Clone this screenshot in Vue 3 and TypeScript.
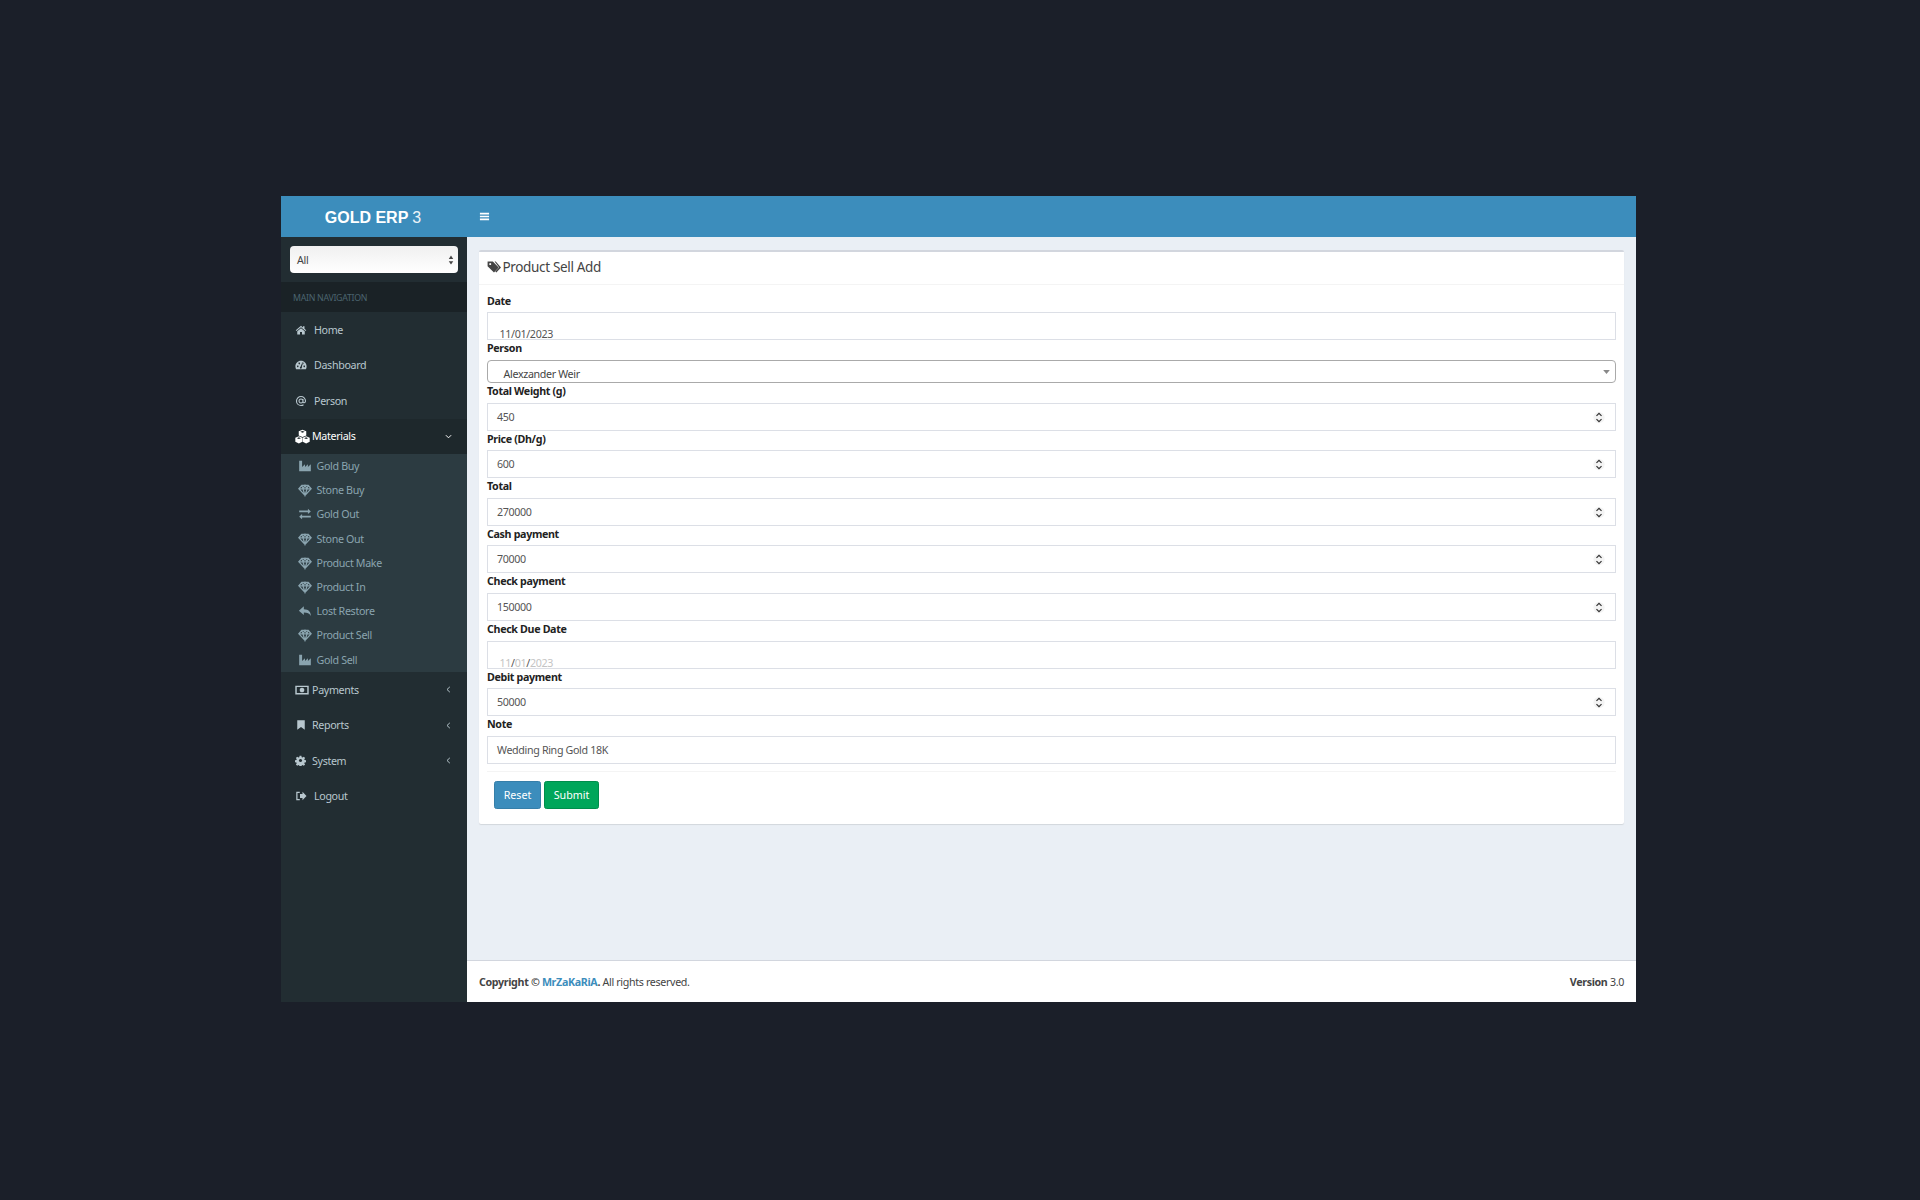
<script setup lang="ts">
const gearHole = 'M12 8.500a3.500 3.500 0 1 0 .01 0z'
const fills: Record<string, string> = {
  home: 'M12 3.500 1.500 12.500l1.300 1.500L12 6.300l9.200 7.700 1.300-1.500-3.500-3V4.500h-3v2.400zM4.500 14.700V21H10v-5h4v5h5.500v-6.300L12 8.500z',
  dashboard: 'M12 3.500C5.600 3.500.8 8.600.8 15c0 2.100.5 4 1.500 5.700h19.400c1-1.700 1.500-3.600 1.500-5.700 0-6.400-4.800-11.500-11.200-11.500zM5.500 13a1.600 1.600 0 1 0 .01 0zM8.500 7.200a1.600 1.600 0 1 0 .01 0zM18.500 13a1.600 1.600 0 1 0 .01 0zM15.500 7.200a1.600 1.600 0 1 0 .01 0zM11 15.500a2 2 0 1 0 2.600 1l1.600-7.800-1.200-.2z',
  cubes: 'M12 1l6 2.600v6.600l-6 2.600-6-2.600V3.600zM12 3 8.500 4.500 12 6l3.500-1.500zM6.200 11.500l5.500 2.400v6.400l-5.500 2.700-5.700-2.700v-6.400zM6.200 13.300 3 14.600l3.200 1.300 3.200-1.300zM17.800 11.500l5.700 2.400v6.400l-5.700 2.700-5.500-2.700v-6.400zM17.800 13.300l-3.200 1.300 3.200 1.300 3.200-1.300z',
  industry: 'M2 21V3h5v10.500L12 9v4.500L17 9v4.500L22 9v12z',
  exchange: 'M2 6h15V3l5 4.500-5 4.500V9H2zM22 15H7v-3l-5 4.500L7 21v-3h15z',
  reply: 'M10 4 1.500 11.500 10 19v-4.500c6 0 9.500 1.500 12 6 0-7-3.500-11.200-12-11.500z',
  money: 'M.5 4.500h23v15H.5zM3 7v10h18V7zM12 8a4 4 0 1 0 .01 0z',
  bookmark: 'M4.500 2.500h15v19L12 16l-7.500 5.500z',
  cog: 'M10 1.500h4l.6 3.200 1.900.8 2.700-1.800 2.800 2.800-1.800 2.700.8 1.900 3.200.6v4l-3.200.6-.8 1.900 1.800 2.700-2.800 2.800-2.700-1.800-1.900.8-.6 3.200h-4l-.6-3.200-1.900-.8-2.700 1.800-2.800-2.800 1.800-2.700-.8-1.900-3.200-.6v-4l3.200-.6.8-1.900-1.800-2.700 2.800-2.800 2.700 1.800 1.900-.8z' + gearHole,
  logout: 'M9.500 3.500H2.500v17h7V18H5V6h4.500zM10 8h5V3.500l8 8.500-8 8.500V16h-5z',
  tag: 'M1 2.500h9L20 13l-8 8.500L1 10.500zM5.500 5a1.800 1.800 0 1 0 .01 0zM13 2.500h2L24 13l-8 8.500-1.800-1.700 6.500-6.800z',
  bars: 'M2 4h20v3.600H2zM2 10.200h20v3.600H2zM2 16.400h20V20H2z'
}
const strokes: Record<string, string> = {
  at: 'M12 8a4 4 0 1 0 .01 0zM16 8v5.500c0 3 5 3 5-1.500 0-5-4-9-9-9s-9 4-9 9 4 9 9 9c2 0 3.500-.5 5-1.500',
  diamond: 'M6.500 4h11L22.500 10 12 21 1.500 10zM1.500 10h21M8.500 10 12 21l3.500-11M8.500 10 12 4l3.500 6M6.500 4l2 6M17.500 4l-2 6',
  left: 'M15.500 5 8 12l7.500 7',
  down: 'M5 8.500l7 7 7-7'
}

interface NavItem { label: string; icon: string; tight?: boolean; chevron?: 'left' | 'down'; active?: boolean }
const navTop: NavItem[] = [
  { label: 'Home', icon: 'home' },
  { label: 'Dashboard', icon: 'dashboard' },
  { label: 'Person', icon: 'at' },
  { label: 'Materials', icon: 'cubes', tight: true, chevron: 'down', active: true }
]
const subItems = [
  { label: 'Gold Buy', icon: 'industry' },
  { label: 'Stone Buy', icon: 'diamond' },
  { label: 'Gold Out', icon: 'exchange' },
  { label: 'Stone Out', icon: 'diamond' },
  { label: 'Product Make', icon: 'diamond' },
  { label: 'Product In', icon: 'diamond' },
  { label: 'Lost Restore', icon: 'reply' },
  { label: 'Product Sell', icon: 'diamond' },
  { label: 'Gold Sell', icon: 'industry' }
]
const navBottom: NavItem[] = [
  { label: 'Payments', icon: 'money', tight: true, chevron: 'left' },
  { label: 'Reports', icon: 'bookmark', tight: true, chevron: 'left' },
  { label: 'System', icon: 'cog', tight: true, chevron: 'left' },
  { label: 'Logout', icon: 'logout' }
]

interface Field { label: string; kind: 'date' | 'empty-date' | 'select' | 'number' | 'text'; value: string }
const fields: Field[] = [
  { label: 'Date', kind: 'date', value: '11/01/2023' },
  { label: 'Person', kind: 'select', value: 'Alexzander Weir' },
  { label: 'Total Weight (g)', kind: 'number', value: '450' },
  { label: 'Price (Dh/g)', kind: 'number', value: '600' },
  { label: 'Total', kind: 'number', value: '270000' },
  { label: 'Cash payment', kind: 'number', value: '70000' },
  { label: 'Check payment', kind: 'number', value: '150000' },
  { label: 'Check Due Date', kind: 'empty-date', value: '' },
  { label: 'Debit payment', kind: 'number', value: '50000' },
  { label: 'Note', kind: 'text', value: 'Wedding Ring Gold 18K' }
]
</script>

<template>
  <div class="window">
    <aside class="sidebar">
      <div class="logo"><b>GOLD ERP</b> <span>3</span></div>
      <div class="filter">
        <div class="filter-select">
          <span>All</span>
          <svg class="updown" viewBox="0 0 8 12"><path d="M4 0l3 4.500H1zM4 12 1 7.500h6z" /></svg>
        </div>
      </div>
      <div class="nav-header">MAIN NAVIGATION</div>
      <nav class="nav">
        <a v-for="item in navTop" :key="item.label" class="nav-item" :class="{ active: item.active, tight: item.tight }">
          <svg class="nav-icon" :class="'i-' + item.icon" viewBox="0 0 24 24">
            <path v-if="fills[item.icon]" :d="fills[item.icon]" fill-rule="evenodd" />
            <path v-else :d="strokes[item.icon]" class="line" />
          </svg>
          <span class="nav-label">{{ item.label }}</span>
          <svg v-if="item.chevron" class="chev" viewBox="0 0 24 24"><path :d="strokes[item.chevron]" class="line thick" /></svg>
        </a>
        <div class="submenu">
          <a v-for="item in subItems" :key="item.label" class="sub-item">
            <svg class="sub-icon" viewBox="0 0 24 24">
              <path v-if="fills[item.icon]" :d="fills[item.icon]" fill-rule="evenodd" />
              <path v-else :d="strokes[item.icon]" class="line" />
            </svg>
            <span>{{ item.label }}</span>
          </a>
        </div>
        <a v-for="item in navBottom" :key="item.label" class="nav-item" :class="{ tight: item.tight }">
          <svg class="nav-icon" :class="'i-' + item.icon" viewBox="0 0 24 24"><path :d="fills[item.icon]" fill-rule="evenodd" /></svg>
          <span class="nav-label">{{ item.label }}</span>
          <svg v-if="item.chevron" class="chev" viewBox="0 0 24 24"><path :d="strokes[item.chevron]" class="line thick" /></svg>
        </a>
      </nav>
    </aside>

    <div class="main">
      <header class="topbar">
        <svg class="burger" viewBox="0 0 24 24"><path :d="fills.bars" /></svg>
      </header>
      <main class="content">
        <section class="box">
          <div class="box-head">
            <svg class="title-icon" viewBox="0 0 24 24"><path :d="fills.tag" fill-rule="evenodd" /></svg>
            <h3>Product Sell Add</h3>
          </div>
          <form class="box-body" @submit.prevent>
            <div v-for="f in fields" :key="f.label" class="group">
              <label>{{ f.label }}</label>
              <div v-if="f.kind === 'date'" class="control date">{{ f.value }}</div>
              <div v-else-if="f.kind === 'empty-date'" class="control date">
                <i>11</i>/<i>01</i>/<i>2023</i>
              </div>
              <div v-else-if="f.kind === 'select'" class="control select">
                {{ f.value }}
                <svg class="caret" viewBox="0 0 10 6"><path d="M0 0h10L5 6z" /></svg>
              </div>
              <div v-else class="control">
                {{ f.value }}
                <svg v-if="f.kind === 'number'" class="spin" viewBox="0 0 12 16">
                  <circle cx="6" cy="8" r="6" />
                  <path d="M3.300 6.300 6 3.600l2.700 2.700M3.300 9.700 6 12.400l2.700-2.700" />
                </svg>
              </div>
            </div>
            <div class="actions">
              <button type="reset" class="btn reset">Reset</button>
              <button type="submit" class="btn submit">Submit</button>
            </div>
          </form>
        </section>
      </main>
      <footer class="footer">
        <div><b>Copyright © <a>MrZaKaRiA</a>.</b> All rights reserved.</div>
        <div><b>Version</b> 3.0</div>
      </footer>
    </div>
  </div>
</template>

<style>
html,
body {
  background: #1b1f29;
  margin: 0;
}
</style>

<style scoped>
.window {
  display: flex;
  width: 1355px;
  height: 806px;
  margin: 196px 0 198px 281px;
  font-family: "Noto Sans", sans-serif;
  font-size: 10.700px;
  letter-spacing: -0.340px;
  color: #333;
}
.sidebar {
  flex: 0 0 186px;
  display: flex;
  flex-direction: column;
  background: #222d32;
}
.logo {
  flex: 0 0 41px;
  display: flex;
  align-items: center;
  justify-content: center;
  gap: 4px;
  padding: 2px 2px 0 0;
  box-sizing: border-box;
  background: #3c8dbc;
  color: #fff;
  font-family: "Liberation Sans", sans-serif;
  font-size: 16px;
  letter-spacing: 0;
}
.logo span {
  font-weight: 300;
  opacity: 0.9;
}
.filter {
  flex: 0 0 45px;
  padding: 9px 9px 0 9px;
  box-sizing: border-box;
}
.filter-select {
  height: 27px;
  box-sizing: border-box;
  display: flex;
  align-items: center;
  justify-content: space-between;
  padding: 0 4px 0 7px;
  border-radius: 4px;
  background: linear-gradient(#f0f0f0, #fff);
  color: #444;
}
.updown {
  width: 6px;
  height: 10px;
  fill: #444;
}
.nav-header {
  flex: 0 0 30px;
  box-sizing: border-box;
  padding: 3px 0 0 12px;
  line-height: 27px;
  font-size: 8.800px;
  letter-spacing: -0.300px;
  color: #4b646f;
  background: #1a2226;
}
.nav {
  display: flex;
  flex-direction: column;
}
.nav-item {
  height: 35.500px;
  display: flex;
  align-items: center;
  padding-left: 14px;
  color: #b8c7ce;
}
.nav-item.active {
  background: #1e282c;
  color: #fff;
}
.nav-icon {
  flex: 0 0 12px;
  width: 12px;
  height: 12px;
  margin-right: 7px;
  fill: currentColor;
}
.nav-item.tight .nav-icon {
  flex-basis: 14px;
  width: 14px;
  height: 14px;
  margin-right: 3px;
}
.nav-item.tight .i-cubes {
  flex-basis: 15px;
  width: 15px;
  height: 15px;
  margin-right: 2px;
}
.nav-item.tight .i-cog {
  flex-basis: 11px;
  width: 11px;
  height: 11px;
  margin-right: 6px;
}
.nav-item.tight .i-bookmark {
  flex-basis: 12px;
  width: 12px;
  height: 12px;
  margin-right: 5px;
}
.nav-label {
  flex: 1;
}
.line {
  fill: none;
  stroke: currentColor;
  stroke-width: 2.200;
}
.thick {
  stroke-width: 2.600;
}
.chev {
  width: 9px;
  height: 9px;
  margin-right: 14px;
}
.submenu {
  height: 218px;
  box-sizing: border-box;
  background: #2c3b41;
}
.sub-item {
  height: 24.200px;
  display: flex;
  align-items: center;
  padding-left: 16.500px;
  color: #8aa4af;
}
.sub-icon {
  width: 14px;
  height: 14px;
  margin-right: 5px;
  fill: currentColor;
}
.main {
  flex: 1;
  min-width: 0;
  display: flex;
  flex-direction: column;
}
.topbar {
  flex: 0 0 41px;
  display: flex;
  align-items: center;
  padding-left: 12px;
  background: #3c8dbc;
}
.burger {
  width: 11px;
  height: 11px;
  fill: #fff;
}
.content {
  flex: 1;
  min-height: 0;
  padding: 12.500px 12px 0;
  background: #eaeff5;
  box-sizing: border-box;
}
.box {
  height: 574.500px;
  box-sizing: border-box;
  background: #fff;
  border-top: 2.500px solid #d2d6de;
  border-radius: 2px;
  box-shadow: 0 1px 1px rgba(0, 0, 0, 0.1);
}
.box-head {
  height: 33px;
  box-sizing: border-box;
  display: flex;
  align-items: center;
  gap: 2px;
  padding: 0 0 2px 7.500px;
  border-bottom: 1px solid #f4f4f4;
  color: #444;
}
.title-icon {
  width: 14px;
  height: 14px;
  fill: #444;
}
.box-head h3 {
  margin: 0;
  font-size: 13.500px;
  font-weight: 400;
}
.box-body {
  padding: 8.400px 8px 0;
  margin: 0;
}
label {
  display: block;
  height: 19.600px;
  line-height: 17px;
  font-weight: 700;
  color: #222;
}
.control {
  position: relative;
  height: 28px;
  line-height: 26px;
  box-sizing: border-box;
  padding-left: 9px;
  border: 1px solid #dcdfe6;
  background: #fff;
  color: #555;
}
.date {
  padding: 15px 0 0 11.500px;
  line-height: 13px;
}
.date i {
  font-style: normal;
  color: #c4c4c4;
}
.select {
  height: 23px;
  line-height: 27px;
  padding-left: 15.500px;
  border-color: #aaa;
  border-radius: 4px;
  color: #444;
}
.caret {
  position: absolute;
  top: 9px;
  right: 5px;
  width: 7px;
  height: 4px;
  fill: #888;
}
.spin {
  position: absolute;
  top: 6px;
  right: 10.500px;
  width: 12px;
  height: 15px;
  fill: none;
}
.spin circle {
  fill: #f4f4f4;
}
.spin path {
  stroke: #333;
  stroke-width: 1.300;
}
.actions {
  display: flex;
  gap: 3px;
  margin-top: 7px;
  padding: 9.500px 0 0 7px;
  border-top: 1px solid #f4f4f4;
}
.btn {
  height: 28px;
  box-sizing: border-box;
  padding: 0;
  border: 1px solid transparent;
  border-radius: 2.500px;
  color: #fff;
  font: inherit;
}
.reset {
  width: 47px;
  background: #3c8dbc;
  border-color: #367fa9;
}
.submit {
  width: 55px;
  background: #00a65a;
  border-color: #008d4c;
}
.footer {
  flex: 0 0 42px;
  box-sizing: border-box;
  display: flex;
  align-items: center;
  justify-content: space-between;
  padding: 0 12px;
  background: #fff;
  border-top: 1px solid #d2d6de;
  color: #444;
}
.footer a {
  color: #3c8dbc;
}
</style>
